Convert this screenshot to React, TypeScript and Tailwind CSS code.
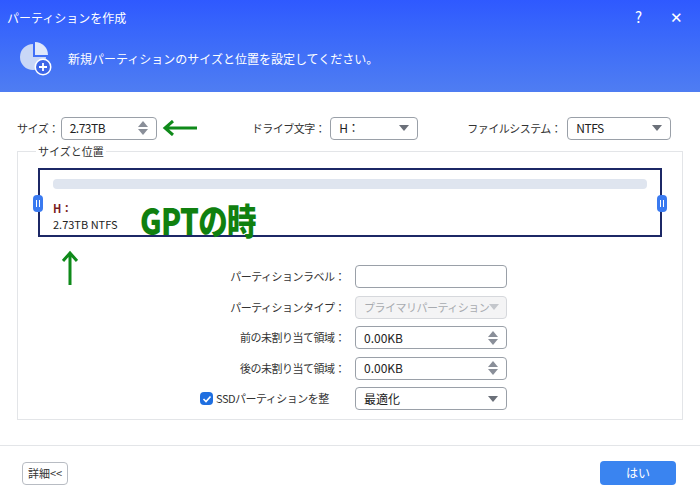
import React from "react";

const font = { fontFamily: '"Noto Sans CJK JP", "Noto Sans", sans-serif' };

function Spin() {
  return (
    <span className="flex flex-col items-center gap-[2px] mr-1 shrink-0">
      <span className="w-0 h-0 border-x-[5px] border-x-transparent border-b-[6px] border-b-[#8a8f99]" />
      <span className="w-0 h-0 border-x-[5px] border-x-transparent border-t-[6px] border-t-[#8a8f99]" />
    </span>
  );
}
function Caret({ light }: { light?: boolean }) {
  return <span className={`w-0 h-0 shrink-0 border-x-[5px] border-x-transparent border-t-[6px] mr-1 ${light ? "border-t-[#c4c7cc]" : "border-t-[#6b7079]"}`} />;
}
function Box({ w, children, right, disabled }: { w: string; children?: React.ReactNode; right?: React.ReactNode; disabled?: boolean }) {
  return (
    <div className={`${w} shrink-0 h-[23px] rounded border flex items-center justify-between pl-2 pr-1 text-[12px] whitespace-nowrap ${disabled ? "border-[#d6d8dc] bg-[#f4f4f5] text-[#a8abb0]" : "border-[#9aa0a8] bg-white text-[#222]"}`}>
      <span className={disabled ? "text-[11px] tracking-[-0.5px]" : ""}>{children}</span>
      {right}
    </div>
  );
}
function Row({ label, children }: { label: React.ReactNode; children: React.ReactNode }) {
  return (
    <div className="flex items-center h-[23px]">
      <div className="w-[337px] text-right pr-[10px] text-[11px] tracking-[-0.5px] text-[#333] whitespace-nowrap">{label}</div>
      {children}
    </div>
  );
}

export default function App() {
  return (
    <div className="w-[700px] h-[500px] bg-white relative overflow-hidden" style={font}>
      <div className="h-[92px] bg-gradient-to-b from-[#2f59ff] to-[#4f7df2] text-white">
        <div className="h-[35px] flex items-center px-[7px] justify-between">
          <span className="text-[12px]">パーティションを作成</span>
          <div className="flex items-center gap-[28px] pr-[10px] text-[15px]">
            <span>?</span>
            <span>✕</span>
          </div>
        </div>
        <div className="flex items-center pl-[19px] gap-[15px] mt-[7px]">
          <svg width="34" height="34" viewBox="0 0 34 34">
            <path d="M14 2 A13 13 0 1 0 27 15 L14 15 Z" fill="#c9d7f7" />
            <path d="M16 0 A13 13 0 0 1 29 13 L16 13 Z" fill="#dfe8fb" />
            <circle cx="24" cy="25" r="8.5" fill="#fff" />
            <circle cx="24" cy="25" r="7" fill="#3d66e8" />
            <path d="M24 21 V29 M20 25 H28" stroke="#fff" strokeWidth="1.8" />
          </svg>
          <span className="text-[12px]">新規パーティションのサイズと位置を設定してください。</span>
        </div>
      </div>

      <div className="flex items-center h-[24px] mt-[24px] px-[17px] text-[11px] tracking-[-0.5px] text-[#333] whitespace-nowrap">
        <span>サイズ：</span>
        <Box w="w-[96px] ml-[2px]" right={<Spin />}>2.73TB</Box>
        <span className="ml-[95px]">ドライブ文字：</span>
        <Box w="w-[88px] ml-[5px]" right={<Caret />}>H：</Box>
        <span className="ml-[49px]">ファイルシステム：</span>
        <Box w="w-[104px] ml-[6px]" right={<Caret />}>NTFS</Box>
      </div>

      <div className="mx-[17px] mt-[11px] h-[269px] border border-[#e3e5e8] relative pt-[16px] px-[20px]">
        <span className="absolute -top-[9px] left-[18px] bg-white px-[2px] text-[11px] text-[#333]">サイズと位置</span>
        <div className="relative h-[69px] border-2 border-[#1c2866] px-[13px] pt-[9px]">
          <div className="h-[10px] bg-[#dfe5ef] rounded-sm" />
          <div className="mt-[11px] text-[11px] leading-[16px] text-[#7a1e1e] font-bold">H：</div>
          <div className="text-[11px] leading-[16px] text-[#222]">2.73TB NTFS</div>
          <div className="absolute -left-[7px] top-[25px] w-[10px] h-[17px] rounded-sm bg-[#3a7af0] flex items-center justify-center gap-[1.5px]">
            <span className="w-[1.5px] h-[7px] bg-white" /><span className="w-[1.5px] h-[7px] bg-white" />
          </div>
          <div className="absolute -right-[7px] top-[25px] w-[10px] h-[17px] rounded-sm bg-[#3a7af0] flex items-center justify-center gap-[1.5px]">
            <span className="w-[1.5px] h-[7px] bg-white" /><span className="w-[1.5px] h-[7px] bg-white" />
          </div>
        </div>
        <div className="flex flex-col gap-[7.5px] mt-[28px] -ml-[20px]">
          <Row label="パーティションラベル："><Box w="w-[152px]" /></Row>
          <Row label="パーティションタイプ："><Box w="w-[152px]" disabled right={<Caret light />}>プライマリパーティション</Box></Row>
          <Row label="前の未割り当て領域："><Box w="w-[152px]" right={<Spin />}>0.00KB</Box></Row>
          <Row label="後の未割り当て領域："><Box w="w-[152px]" right={<Spin />}>0.00KB</Box></Row>
          <div className="flex items-center h-[23px]">
            <div className="w-[337px] flex justify-start pl-[182px]">
              <div className="flex items-center gap-[3px] text-[11px] tracking-[-0.5px] text-[#333] whitespace-nowrap">
                <span className="w-[13px] h-[13px] bg-[#1f6fe0] rounded-sm flex items-center justify-center">
                  <svg width="10" height="10" viewBox="0 0 10 10"><path d="M1.5 5 L4 7.5 L8.5 2.5" stroke="#fff" strokeWidth="1.6" fill="none" /></svg>
                </span>
                SSDパーティションを整
              </div>
            </div>
            <Box w="w-[152px]" right={<Caret />}>最適化</Box>
          </div>
        </div>
      </div>

      <div className="absolute left-0 right-0 top-[445px] border-t border-[#e3e5e8] h-[55px] flex items-center justify-between px-[22px]">
        <div className="h-[23px] px-[5px] border border-[#b8bcc3] rounded text-[11px] text-[#333] flex items-center">詳細&lt;&lt;</div>
        <div className="w-[76px] h-[24px] rounded bg-[#3a84f0] text-white text-[12px] flex items-center justify-center mr-[2px]">はい</div>
      </div>

      {/* annotations */}
      <svg className="absolute left-[162px] top-[120px]" width="36" height="16" viewBox="0 0 36 16">
        <path d="M35 8 H4 M11 1 L3 8 L11 15" stroke="#0f8a1a" strokeWidth="3" fill="none" />
      </svg>
      <svg className="absolute left-[62px] top-[250px]" width="16" height="36" viewBox="0 0 16 36">
        <path d="M8 35 V4 M1 11 L8 3 L15 11" stroke="#0f8a1a" strokeWidth="3" fill="none" />
      </svg>
      <div className="absolute left-[140px] top-[197px] text-[36px] font-black text-[#10800f] leading-[44px] tracking-tight whitespace-nowrap" style={{ fontFamily: '"Noto Sans CJK JP", sans-serif', transform: "scaleX(0.82)", transformOrigin: "left" }}>GPTの時</div>
    </div>
  );
}
